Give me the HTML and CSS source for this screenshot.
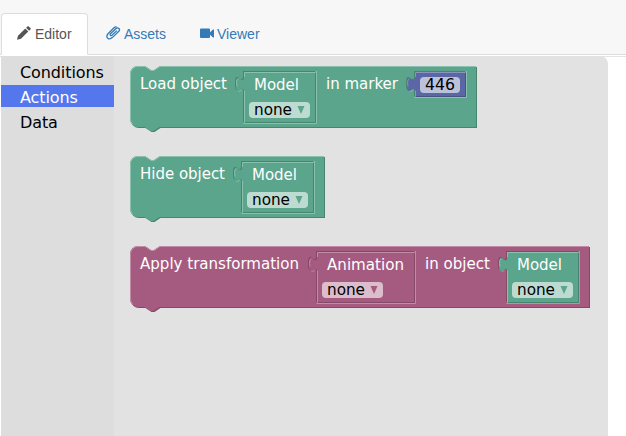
FILE: index.html
```
<!DOCTYPE html>
<html lang="en">
<head>
<meta charset="utf-8">
<title>Editor</title>
<link rel="stylesheet" href="styles.css">
</head>
<body>
<nav class="tabs">
  <a class="tab active"><svg class="icon" width="14" height="14" viewBox="0 0 14 14"><path d="M0 13.800l1-4L8.300 2.600l3 3L4 12.800zM9.100 1.800L10.400.6q.8-.7 1.500 0l1.500 1.500q.7.7 0 1.500L12.100 4.800z"/></svg>Editor</a>
  <a class="tab"><svg class="icon clip" width="15" height="14" viewBox="0 0 15 14"><path d="M10.800 4.600L6 9.200c-1.200 1.100-2.600-.3-1.500-1.400l5.300-5.100c2.300-2 4.900.5 3 2.600L6.300 11.600c-3.300 3-7.300-.3-4.500-3.600L8 1.800q1.200-1.200 2.600-.9"/></svg>Assets</a>
  <a class="tab"><svg class="icon" width="14" height="14" viewBox="0 0 14 14"><path d="M1 2.500h8q1 0 1 1v2.700L13 3.500h1v8h-1L10 8.800V11q0 1-1 1H1q-1 0-1-1V3.500q0-1 1-1z"/></svg>Viewer</a>
</nav>
<main class="workspace">
  <ul class="toolbox">
    <li>Conditions</li>
    <li class="selected">Actions</li>
    <li>Data</li>
  </ul>
  <section class="flyout">
    <svg class="canvas" width="494" height="380" viewBox="114 56 494 380">
      <defs>
        <path id="model" d="M0 0H72V51H0V20c0-10-8 8-8-7.500s8 2.500 8-7.500z"/>
        <path id="model-light" d="M.5 50.500V18.500M-7 14.500q-1.300-7 1.500-7.900M.5 5V.5H71.500"/>
        <path id="model-rim" d="M72.500-1V51.500H-.5M-5.500 19.500l3-1"/>
        <path id="anim" d="M0 0H98V51H0V20c0-10-8 8-8-7.500s8 2.500 8-7.500z"/>
        <path id="anim-light" d="M.5 50.500V18.500M-7 14.500q-1.300-7 1.500-7.900M.5 5V.5H97.500"/>
        <path id="anim-rim" d="M98.500-1V51.500H-.5M-5.500 19.500l3-1"/>
        <path id="num" d="M0 0H51V25H0V20c0-10-8 8-8-7.500s8 2.500 8-7.500z"/>
        <path id="num-light" d="M.5 24.500V18.500M-7 14.500q-1.300-7 1.500-7.900M.5 5V.5H50.500"/>
        <path id="num-rim" d="M51.500-1V25.500H-.5M-5.500 19.500l3-1"/>
        <path id="load" d="M0 8A8 8 0 0 1 8 0H15l6 4h3l6-4H346V61H29.500l-6 4h-3l-6-4H8a8 8 0 0 1-8-8z"/>
        <path id="hide" d="M0 8A8 8 0 0 1 8 0H15l6 4h3l6-4H194V61H29.500l-6 4h-3l-6-4H8a8 8 0 0 1-8-8z"/>
        <path id="apply" d="M0 8A8 8 0 0 1 8 0H15l6 4h3l6-4H459V61H29.500l-6 4h-3l-6-4H8a8 8 0 0 1-8-8z"/>
        <path id="edge" d="M2.700 58.300A7.500 7.500 0 0 1 .5 53V8A7.500 7.500 0 0 1 8 .5H15l6 4h3l6-4"/>
        <path id="caret" d="M53.500 35H60.500L57 43z"/>
      </defs>

      <g class="green" transform="translate(130 66)">
        <use href="#load" class="dark" x="1" y="1"/><use href="#load" class="fill"/>
        <use href="#edge" class="light"/><path class="light" d="M30 .5H346"/>
        <text x="10" y="23" textLength="87" lengthAdjust="spacingAndGlyphs">Load object</text>
        <text x="196" y="23" textLength="72" lengthAdjust="spacingAndGlyphs">in marker</text>
        <g transform="translate(114 6)">
          <use href="#model" class="dark" x="-1" y="-1"/><use href="#model-rim" class="light"/>
          <use href="#model" class="fill"/><use href="#model-light" class="light"/><path class="shade" d="M71.500 1V50.500H1"/>
          <text x="10" y="18" textLength="45" lengthAdjust="spacingAndGlyphs">Model</text>
          <rect class="field" x="5" y="30" width="61" height="16" rx="4"/>
          <text class="value" x="10" y="43" textLength="38" lengthAdjust="spacingAndGlyphs">none</text><use href="#caret" class="caret" y="-1"/>
        </g>
        <g class="indigo" transform="translate(285 6)">
          <g class="green"><use href="#num" class="dark" x="-1" y="-1"/><use href="#num-rim" class="light"/></g>
          <use href="#num" class="fill"/><use href="#num-light" class="light"/><path class="shade" d="M50.500 1V24.500H1"/>
          <rect class="field" x="5" y="5" width="40" height="16" rx="4"/>
          <text class="value" x="10" y="18" textLength="30" lengthAdjust="spacingAndGlyphs">446</text>
        </g>
      </g>

      <g class="green" transform="translate(130 156)">
        <use href="#hide" class="dark" x="1" y="1"/><use href="#hide" class="fill"/>
        <use href="#edge" class="light"/><path class="light" d="M30 .5H194"/>
        <text x="10" y="23" textLength="85" lengthAdjust="spacingAndGlyphs">Hide object</text>
        <g transform="translate(112 6)">
          <use href="#model" class="dark" x="-1" y="-1"/><use href="#model-rim" class="light"/>
          <use href="#model" class="fill"/><use href="#model-light" class="light"/><path class="shade" d="M71.500 1V50.500H1"/>
          <text x="10" y="18" textLength="45" lengthAdjust="spacingAndGlyphs">Model</text>
          <rect class="field" x="5" y="30" width="61" height="16" rx="4"/>
          <text class="value" x="10" y="43" textLength="38" lengthAdjust="spacingAndGlyphs">none</text><use href="#caret" class="caret" y="-1"/>
        </g>
      </g>

      <g class="purple" transform="translate(130 246)">
        <use href="#apply" class="dark" x="1" y="1"/><use href="#apply" class="fill"/>
        <use href="#edge" class="light"/><path class="light" d="M30 .5H459"/>
        <text x="10" y="23" textLength="159" lengthAdjust="spacingAndGlyphs">Apply transformation</text>
        <text x="295" y="23" textLength="65" lengthAdjust="spacingAndGlyphs">in object</text>
        <g transform="translate(187 6)">
          <use href="#anim" class="dark" x="-1" y="-1"/><use href="#anim-rim" class="light"/>
          <use href="#anim" class="fill"/><use href="#anim-light" class="light"/><path class="shade" d="M97.500 1V50.500H1"/>
          <text x="10" y="18" textLength="77" lengthAdjust="spacingAndGlyphs">Animation</text>
          <rect class="field" x="5" y="30" width="61" height="16" rx="4"/>
          <text class="value" x="10" y="43" textLength="38" lengthAdjust="spacingAndGlyphs">none</text><use href="#caret" class="caret" y="-1"/>
        </g>
        <g class="green" transform="translate(377 6)">
          <g class="purple"><use href="#model" class="dark" x="-1" y="-1"/><use href="#model-rim" class="light"/></g>
          <use href="#model" class="fill"/><use href="#model-light" class="light"/><path class="shade" d="M71.500 1V50.500H1"/>
          <text x="10" y="18" textLength="45" lengthAdjust="spacingAndGlyphs">Model</text>
          <rect class="field" x="5" y="30" width="61" height="16" rx="4"/>
          <text class="value" x="10" y="43" textLength="38" lengthAdjust="spacingAndGlyphs">none</text><use href="#caret" class="caret" y="-1"/>
        </g>
      </g>
    </svg>
  </section>
</main>
</body>
</html>
```
FILE: styles.css
```
* { box-sizing: border-box; }
body {
  margin: 0;
  height: 436px;
  overflow: hidden;
  display: flex;
  flex-direction: column;
  background: #fff;
}
.tabs {
  display: flex;
  align-items: flex-end;
  gap: 2px;
  height: 55px;
  padding-left: 1px;
  background: #f7f7f7;
  box-shadow: inset 0 -1px #ddd;
  font: 14px/20px "Liberation Sans", Arial, sans-serif;
}
.tab {
  display: flex;
  align-items: center;
  gap: 3px;
  height: 42px;
  padding: 0 15px;
  border: 1px solid transparent;
  border-radius: 4px 4px 0 0;
  color: #337ab7;
}
.tab.active {
  width: 87px;
  gap: 4px;
  color: #555;
  background: #fff;
  border-color: #ddd;
  border-bottom-color: #fff;
}
.icon { fill: currentColor; flex: none; margin-top: -2px; }
.clip { fill: none; stroke: currentColor; stroke-width: 1.300; }
.workspace {
  flex: 1;
  display: flex;
  margin-top: 1px;
  padding-left: 1px;
  box-shadow: inset 0 1px #e4e4e4;
}
.toolbox {
  width: 113px;
  margin: 0;
  padding: 4px 0 0;
  list-style: none;
  background: #ddd;
  font: 16px/22px "DejaVu Sans", sans-serif;
  color: #000;
}
.toolbox li {
  height: 22px;
  margin-bottom: 3px;
  padding-left: 19px;
  padding-top: 2px;
  letter-spacing: -.1px;
}
.toolbox .selected { background: #5577ee; color: #fff; }
.flyout {
  width: 494px;
  background: #e2e2e2;
  border-top-right-radius: 8px;
}
.canvas { display: block; }
.canvas text {
  font: 16px "DejaVu Sans", sans-serif;
  fill: #fff;
}
.canvas .value { fill: #000; }
.caret { fill: var(--base); }
.green { --base: #5ba58c; --hi: #8cc0ae; --lo: #498470; }
.purple { --base: #a55b80; --hi: #c08ca6; --lo: #844966; }
.indigo { --base: #5b67a5; --hi: #8c95c0; --lo: #495284; }
.fill { fill: var(--base); }
.dark { fill: var(--lo); }
.light { fill: none; stroke: var(--hi); stroke-width: 1; }
.shade { fill: none; stroke: var(--lo); stroke-width: 1; }
.field { fill: #fff; fill-opacity: .6; }
```
